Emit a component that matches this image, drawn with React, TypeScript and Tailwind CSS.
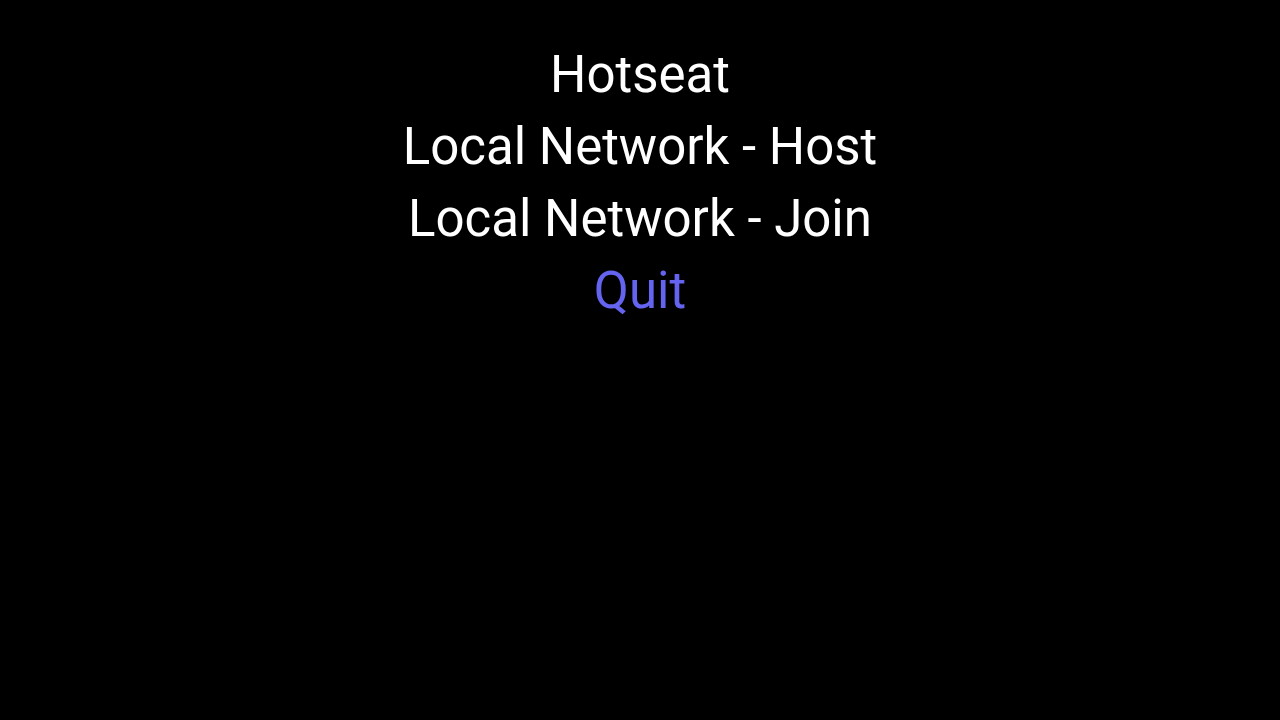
import React from 'react';

const items = [
  { label: 'Hotseat', active: false },
  { label: 'Local Network - Host', active: false },
  { label: 'Local Network - Join', active: false },
  { label: 'Quit', active: true },
];

export default function App() {
  return (
    <div className="w-[1280px] h-[720px] bg-black flex flex-col items-center pt-[39px] font-['Roboto',sans-serif]">
      {items.map((item) => (
        <div
          key={item.label}
          className={`text-[51px] leading-[72px] ${item.active ? 'text-[#6464f0]' : 'text-white'}`}
        >
          {item.label}
        </div>
      ))}
    </div>
  );
}
